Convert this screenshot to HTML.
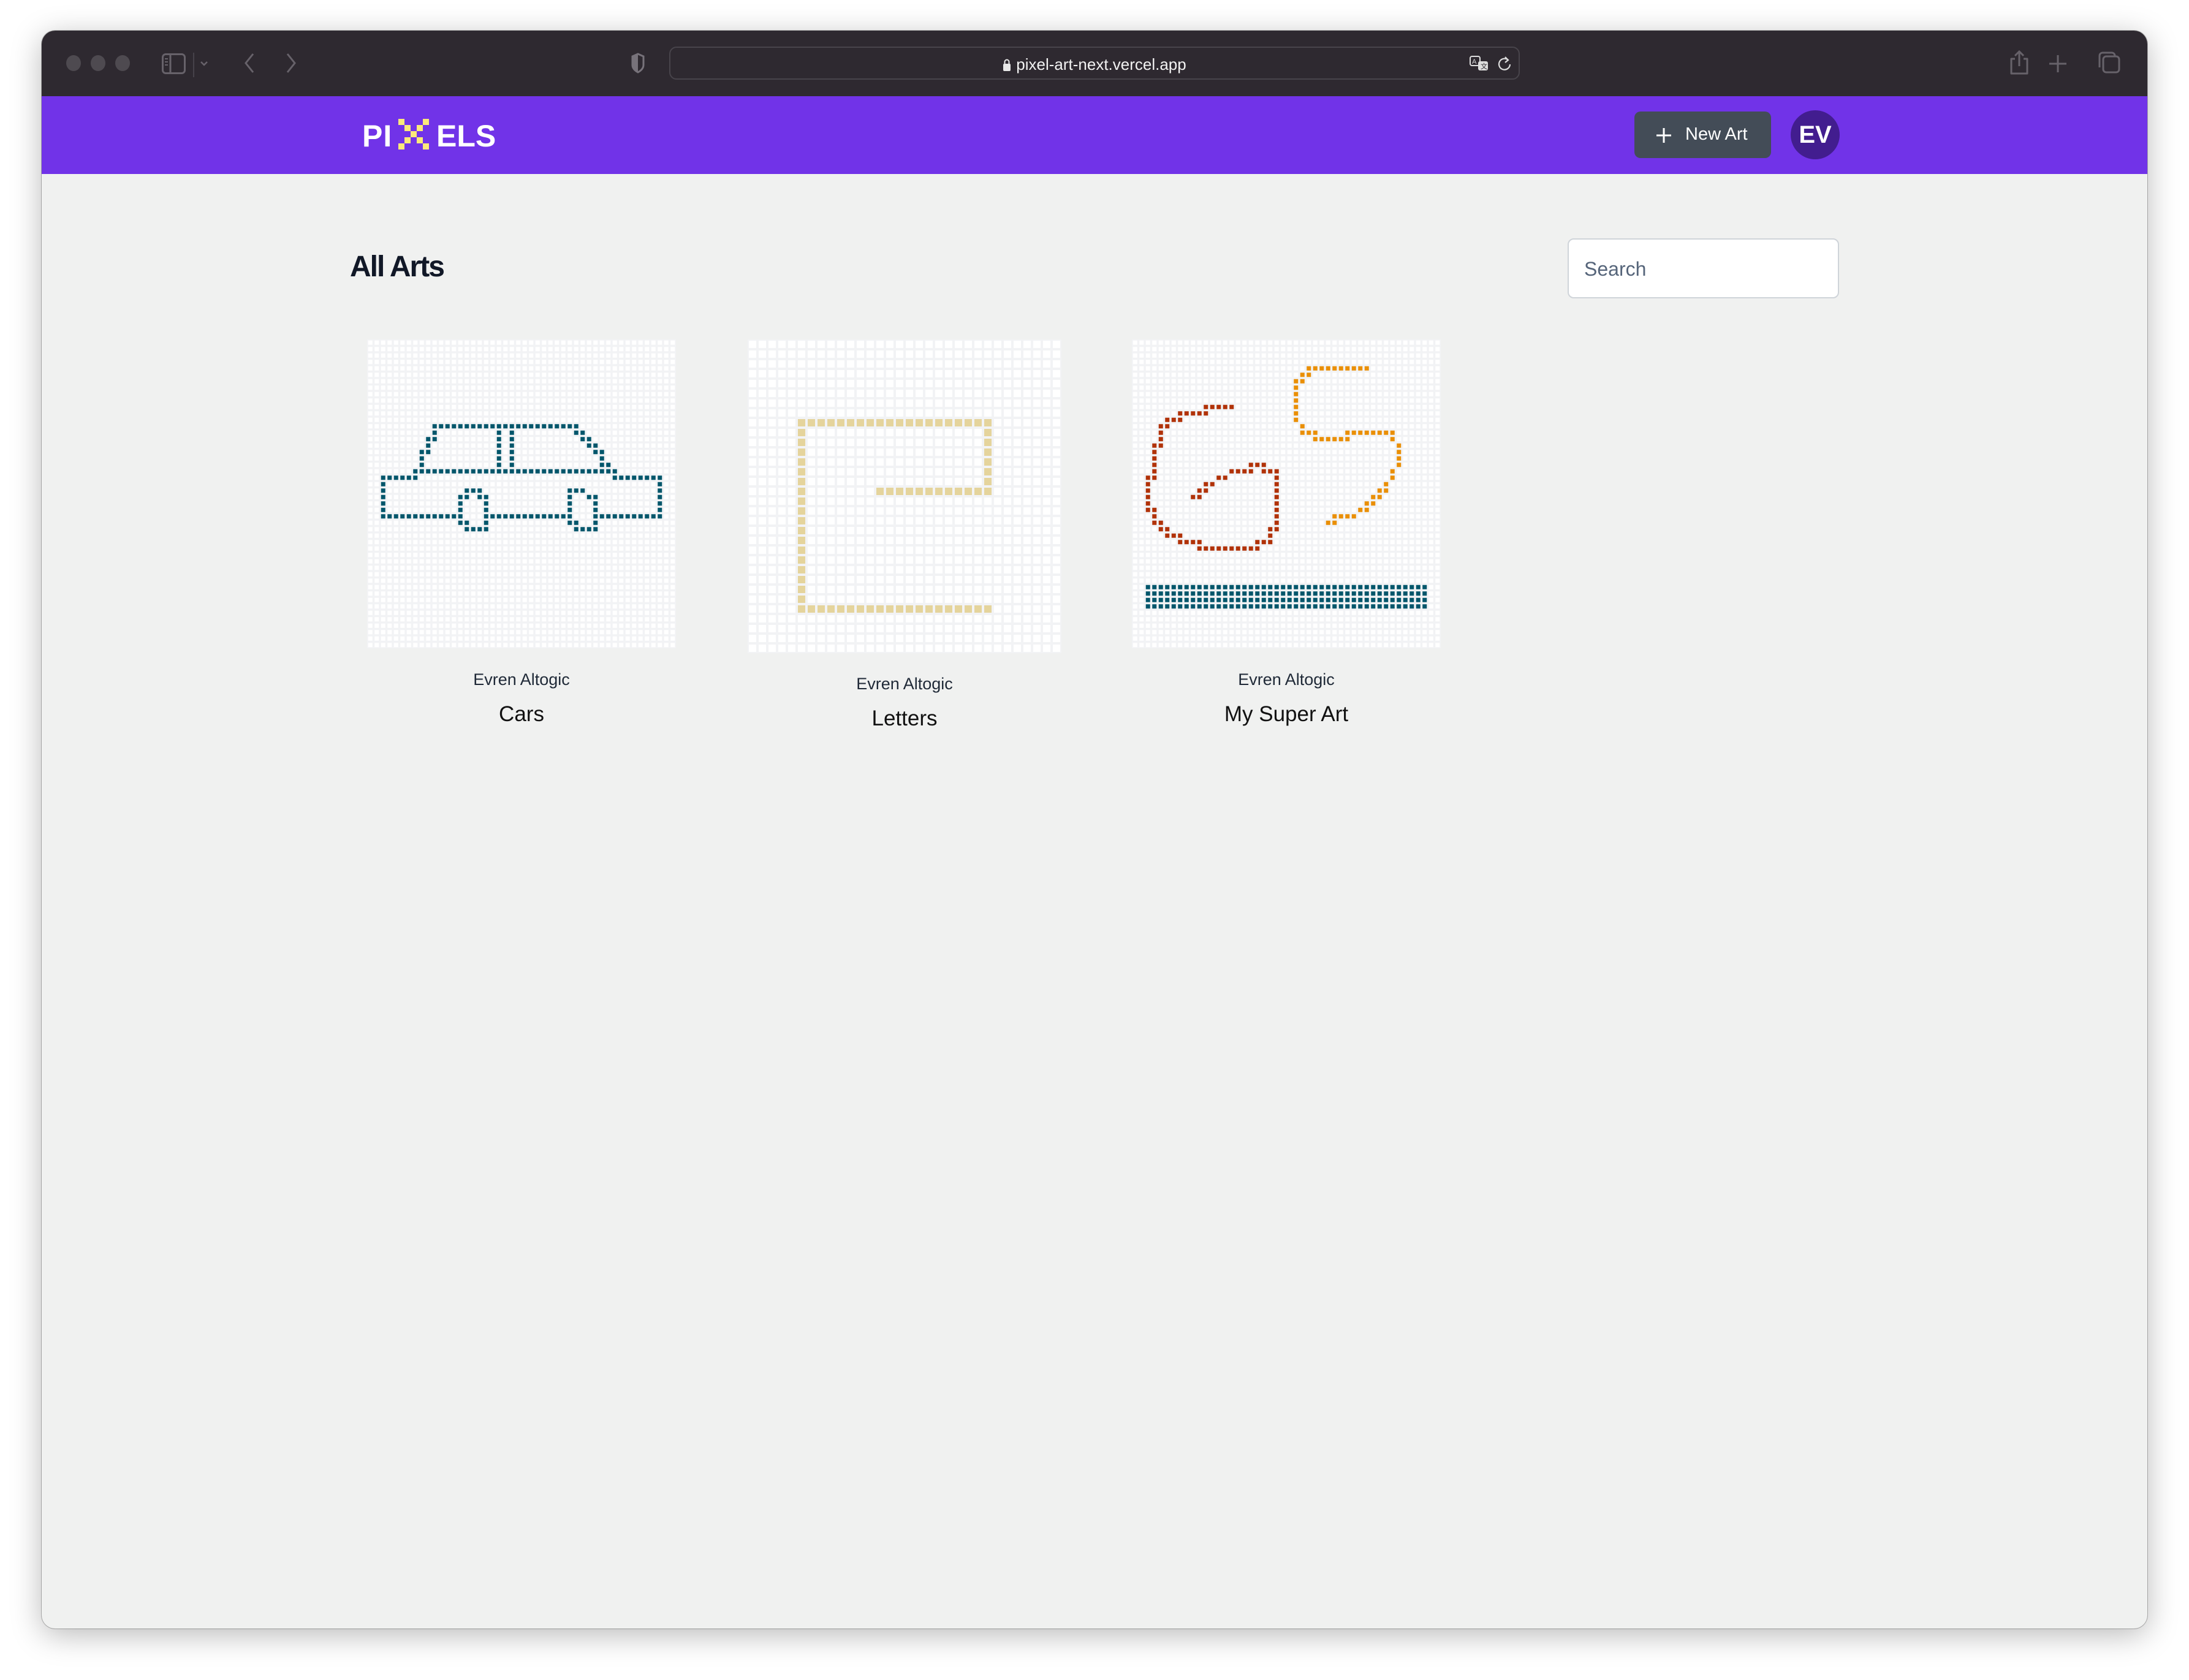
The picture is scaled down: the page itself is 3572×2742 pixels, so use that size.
<!DOCTYPE html>
<html><head><meta charset="utf-8">
<style>
html,body{margin:0;padding:0;}
body{width:3572px;height:2742px;background:#fff;position:relative;overflow:hidden;font-family:"Liberation Sans",sans-serif;}
.win{position:absolute;left:68px;top:50px;width:3436px;height:2608px;border-radius:22px;overflow:hidden;background:#f0f1f0;box-shadow:0 10px 50px rgba(0,0,0,0.28),0 0 0 1px rgba(0,0,0,0.25);}
.title{position:absolute;left:0;top:0;width:100%;height:107px;background:#2e2930;border-bottom:2px solid #111;}
.tl{position:absolute;top:40px;width:24px;height:26px;border-radius:50%;background:#4e4a50;}
.url{position:absolute;left:1024px;top:26px;width:1388px;height:54px;border:2px solid #48444b;border-radius:12px;box-sizing:border-box;}
.urltext{position:absolute;left:0;width:100%;top:12px;text-align:center;color:#f2f2f2;font-size:26px;}
.nav{position:absolute;left:0;top:107px;width:100%;height:127px;background:#7133e8;}
.card{position:absolute;text-align:center;}
.author{font-size:27px;color:#1f2937;}
.name{font-size:35px;color:#111;font-weight:500;}
</style></head><body>
<div class="win">
  <div class="title">
    <div class="tl" style="left:40px"></div>
    <div class="tl" style="left:80px"></div>
    <div class="tl" style="left:120px"></div>
    <svg style="position:absolute;left:196px;top:36px" width="130" height="40" viewBox="0 0 130 40">
      <rect x="1.5" y="2.5" width="36" height="31" rx="5" fill="none" stroke="#67626a" stroke-width="3"/>
      <line x1="14" y1="3" x2="14" y2="33" stroke="#67626a" stroke-width="3"/>
      <line x1="5" y1="10" x2="10" y2="10" stroke="#67626a" stroke-width="2"/>
      <line x1="5" y1="15" x2="10" y2="15" stroke="#67626a" stroke-width="2"/>
      <line x1="5" y1="20" x2="10" y2="20" stroke="#67626a" stroke-width="2"/>
      <line x1="52" y1="0" x2="52" y2="40" stroke="#46424a" stroke-width="2"/>
      <polyline points="64,15 69,20 74,15" fill="none" stroke="#67626a" stroke-width="2.5"/>
    </svg>
    <svg style="position:absolute;left:325px;top:34px" width="200" height="40">
      <polyline points="20,4 8,19 20,34" fill="none" stroke="#67626a" stroke-width="3"/>
      <polyline points="76,4 88,19 76,34" fill="none" stroke="#67626a" stroke-width="3"/>
    </svg>
    <svg style="position:absolute;left:960px;top:36px" width="26" height="34"><path d="M13 2 L22 6 L22 20 Q22 27 13 32 Q4 27 4 20 L4 6 Z" fill="none" stroke="#77727a" stroke-width="3"/><path d="M13 2 L4 6 L4 20 Q4 27 13 32 Z" fill="#77727a"/></svg>
    <div class="url">
      <div class="urltext"><svg width="14" height="22" style="vertical-align:-3px;margin-right:8px"><rect x="1" y="9" width="12" height="12" rx="2" fill="#e8e8e8"/><path d="M3.5 9 V6 a3.5 3.5 0 0 1 7 0 V9" fill="none" stroke="#e8e8e8" stroke-width="2"/></svg>pixel-art-next.vercel.app</div>
      <svg style="position:absolute;right:42px;top:12px" width="38" height="30"><rect x="1" y="2" width="16" height="15" rx="3" fill="none" stroke="#ddd" stroke-width="2"/><text x="4" y="14" font-size="11" fill="#ddd" font-family="Liberation Sans">A</text><rect x="14" y="10" width="16" height="15" rx="3" fill="#ddd"/><text x="18" y="22" font-size="11" fill="#2e2930" font-family="Liberation Sans, Noto Sans CJK SC, sans-serif">文</text></svg>
      <svg style="position:absolute;right:10px;top:12px" width="24" height="30"><path d="M17 8 A9 9 0 1 0 20 15" fill="none" stroke="#ddd" stroke-width="2.2"/><polyline points="12,3 17,8 12,12" fill="none" stroke="#ddd" stroke-width="2.2"/></svg>
    </div>
    <svg style="position:absolute;left:3210px;top:30px" width="220" height="50">
      <path d="M10 16 H4 V40 H30 V16 H24" fill="none" stroke="#67626a" stroke-width="3" stroke-linejoin="round"/>
      <line x1="17" y1="4" x2="17" y2="28" stroke="#67626a" stroke-width="3"/>
      <polyline points="10,11 17,4 24,11" fill="none" stroke="#67626a" stroke-width="3"/>
      <line x1="80" y1="10" x2="80" y2="38" stroke="#67626a" stroke-width="3"/>
      <line x1="66" y1="24" x2="94" y2="24" stroke="#67626a" stroke-width="3"/>
      <rect x="154" y="12" width="26" height="26" rx="5" fill="none" stroke="#67626a" stroke-width="3"/>
      <path d="M148 30 V11 a5 5 0 0 1 5 -5 H168 a5 5 0 0 1 5 5" fill="none" stroke="#67626a" stroke-width="3"/>
    </svg>
  </div>
  <div class="nav">
    <div style="position:absolute;left:523px;top:40px;font-weight:bold;font-size:50px;color:#fff;letter-spacing:1px;line-height:50px">PI</div>
    <svg style="position:absolute;left:582px;top:37px" width="52" height="52">
      <g fill="#fbe97a">
        <rect x="0" y="0" width="10" height="10"/><rect x="40" y="0" width="10" height="10"/>
        <rect x="10" y="10" width="10" height="10"/><rect x="30" y="10" width="10" height="10"/>
        <rect x="20" y="20" width="10" height="10"/>
        <rect x="10" y="30" width="10" height="10"/><rect x="30" y="30" width="10" height="10"/>
        <rect x="0" y="40" width="10" height="10"/><rect x="40" y="40" width="10" height="10"/>
      </g>
    </svg>
    <div style="position:absolute;left:644px;top:40px;font-weight:bold;font-size:50px;color:#fff;letter-spacing:0px;line-height:50px">ELS</div>
    <div style="position:absolute;left:2599px;top:25px;width:223px;height:76px;border-radius:10px;background:#434c57;color:#fff;font-size:29px;font-weight:500;">
      <svg style="position:absolute;left:35px;top:26px" width="26" height="26"><line x1="13" y1="1" x2="13" y2="25" stroke="#fff" stroke-width="3"/><line x1="1" y1="13" x2="25" y2="13" stroke="#fff" stroke-width="3"/></svg>
      <span style="position:absolute;left:83px;top:21px">New Art</span>
    </div>
    <div style="position:absolute;left:2854px;top:23px;width:80px;height:80px;border-radius:50%;background:#421d8f;color:#fff;font-size:40px;font-weight:bold;text-align:center;line-height:80px">EV</div>
  </div>
  <div style="position:absolute;left:503px;top:358px;font-size:48px;font-weight:bold;color:#111827;letter-spacing:-2px">All Arts</div>
  <div style="position:absolute;left:2490px;top:339px;width:443px;height:98px;box-sizing:border-box;border:2px solid #cfd4d9;border-radius:10px;background:#fff;">
    <span style="position:absolute;left:25px;top:30px;font-size:32px;color:#56657a">Search</span>
  </div>

  <svg id="g1" style="position:absolute;left:531px;top:504px" width="504" height="504"></svg>
  <svg id="g2" style="position:absolute;left:1152px;top:504px" width="512" height="512"></svg>
  <svg id="g3" style="position:absolute;left:1779px;top:504px" width="504" height="504"></svg>

  <div class="card" style="left:583px;width:400px;top:1044px"><div class="author">Evren Altogic</div><div class="name" style="margin-top:21px">Cars</div></div>
  <div class="card" style="left:1208px;width:400px;top:1051px"><div class="author">Evren Altogic</div><div class="name" style="margin-top:21px">Letters</div></div>
  <div class="card" style="left:1831px;width:400px;top:1044px"><div class="author">Evren Altogic</div><div class="name" style="margin-top:21px">My Super Art</div></div>
</div>
<script>
function R(a,b){var r=[];for(var i=a;i<=b;i++)r.push(i);return r;}
function build(id,n,pitch,sz,map){
  var s=document.getElementById(id),h='<rect width="'+(n*pitch)+'" height="'+(n*pitch)+'" fill="#f2f3f5"/>';
  for(var r=0;r<n;r++)for(var c=0;c<n;c++){
    var col=(map[r+','+c])||'#ffffff';
    h+='<rect x="'+(c*pitch+(pitch-sz)/2).toFixed(2)+'" y="'+(r*pitch+(pitch-sz)/2).toFixed(2)+'" width="'+sz+'" height="'+sz+'" fill="'+col+'"/>';
  }
  s.innerHTML=h;
}
function add(m,color,rows){for(var r in rows){rows[r].forEach(function(c){m[r+','+c]=color;});}}
var m1={},T='#02566b';
add(m1,T,{
13:R(10,32),14:[10,20,22,32,33],15:[9,10,20,22,33,34],16:[9,20,22,34,35],17:[8,9,20,22,35,36],18:[8,20,22,36],19:[8,20,22,36,37],
20:R(7,38),21:R(2,7).concat(R(38,45)),22:[2,45],23:[2,15,16,17,31,32,33,45],24:[2,14,15,17,18,31,34,35,45],
25:[2,14,18,31,35,45],26:[2,14,18,31,35,45],27:R(2,14).concat(R(18,31)).concat(R(35,45)),28:[14,15,18,31,32,35],29:R(15,18).concat(R(32,35))
});
build('g1',48,10.5,7,m1);
var m2={},Y='#e5d49c',o2={8:R(5,24),15:[5].concat(R(13,24)),27:R(5,24)};
for(var r=9;r<=14;r++)o2[r]=[5,24];
for(var r=16;r<=26;r++)o2[r]=[5];
add(m2,Y,o2);
build('g2',32,16,12,m2);
var m3={},Rd='#b13208',Or='#ea8f05';
add(m3,Rd,{
10:R(11,15),11:R(7,11),12:[5,6,7],13:[4,5],14:[4],15:[4],16:[3,4],17:[3],18:[3],19:[3,18,19,20],
20:[3,15,16,17,18,20,21,22],21:[2,3,13,14,22],22:[2,11,12,22],23:[2,10,11,22],24:[2,9,10,22],25:[2,22],
26:[2,3,22],27:[3,22],28:[3,4,22],29:[4,5,21,22],30:[5,6,7,21],31:[7,8,9,10,19,20,21],32:R(10,19)
});
var oo={4:R(27,36),5:[26,27],6:[25,26],13:[26],14:[26,27,28].concat(R(33,40)),15:R(28,33).concat([40]),
16:[41],17:[41],18:[41],19:[41],20:[40],21:[40],22:[39],23:[38,39],24:[37,38],25:[36,37],26:[35,36],27:R(31,34),28:[30,31]};
for(var r=7;r<=12;r++)oo[r]=[25];
add(m3,Or,oo);
add(m3,T,{38:R(2,45),39:R(2,45),40:R(2,45),41:R(2,45)});
build('g3',48,10.5,7,m3);
</script>
</body></html>
